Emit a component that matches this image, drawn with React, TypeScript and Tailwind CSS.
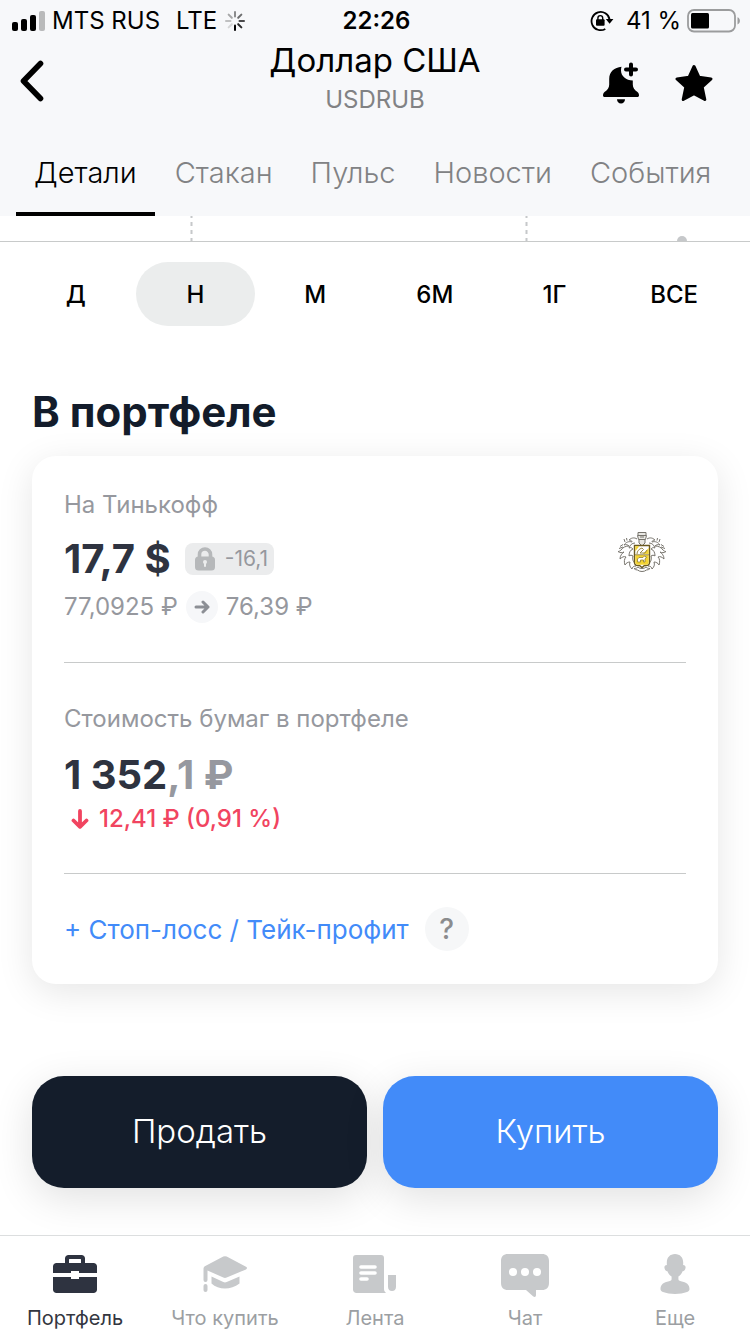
import { useState } from "react";
import type { ReactNode } from "react";

const TABS = ["Детали", "Стакан", "Пульс", "Новости", "События"];
const RANGES = ["Д", "Н", "М", "6М", "1Г", "ВСЕ"];

function SignalIcon() {
  return (
    <svg width="34" height="20" viewBox="0 0 34 20" aria-hidden="true">
      <rect x="0" y="11" width="6" height="9" rx="2" />
      <rect x="9" y="8" width="6" height="12" rx="2" />
      <rect x="18" y="4" width="6" height="16" rx="2" />
      <rect x="27" y="0" width="6" height="20" rx="2" fill="#b9babb" />
    </svg>
  );
}

function SpinnerIcon() {
  const shades = ["#8b8c8d", "#6d6e6f", "#4a4a4b", "#2a2a2a", "#000", "#d4d5d6", "#bfc0c1", "#a6a7a8"];
  return (
    <svg width="20" height="20" viewBox="0 0 20 20" aria-hidden="true">
      {shades.map((shade, i) => (
        <line
          key={shade}
          x1="10"
          y1="1"
          x2="10"
          y2="5.5"
          stroke={shade}
          strokeWidth="2"
          strokeLinecap="round"
          transform={`rotate(${i * 45} 10 10)`}
        />
      ))}
    </svg>
  );
}

function RotationLockIcon() {
  return (
    <svg width="24" height="22" viewBox="0 0 24 22" fill="none" stroke="#000" strokeWidth="1.8" aria-hidden="true">
      <path d="M15.3 18.9A9.1 9.1 0 1 1 19.6 9.5" />
      <path d="M15.8 9h7.6l-3.8 4.8z" fill="#000" stroke="none" />
      <rect x="6" y="9.3" width="8.6" height="6.4" rx="1" fill="#000" stroke="none" />
      <path d="M7.9 10V8a2.4 2.4 0 0 1 4.8 0v2" strokeWidth="1.4" />
    </svg>
  );
}

function BatteryIcon() {
  return (
    <svg width="54" height="24" viewBox="0 0 54 24" aria-hidden="true">
      <rect x="1" y="1" width="47" height="21.5" rx="6" fill="none" stroke="#9b9c9d" strokeWidth="1.8" />
      <rect x="4" y="4" width="18" height="15.5" rx="1.500" />
      <path d="M50.500 8.2c3.2 1.2 3.2 6 0 7.2z" fill="#9b9c9d" />
    </svg>
  );
}

function BackIcon() {
  return (
    <svg width="24" height="42" viewBox="0 0 24 42" fill="none" aria-hidden="true">
      <path d="M20.500 3.500 3.500 21l17 17.500" stroke="#000" strokeWidth="5.600" strokeLinecap="round" strokeLinejoin="round" />
    </svg>
  );
}

function BellPlusIcon() {
  return (
    <svg width="36" height="42" viewBox="0 0 36 42" aria-hidden="true">
      <path d="M18.500 4.800C11.500 5.500 6.200 9.500 6.200 17v5.500c0 3.500-1.700 5.500-4.700 7.500C.5 30.800 0 32 0 33.500 0 34.400.7 35 1.500 35h33c.8 0 1.500-.6 1.500-1.500 0-1.500-.5-2.700-1.500-3.500-3-2-4.700-4-4.700-7.500v-4C23 18.500 18 14 18 8.500c0-1.400.2-2.600.5-3.700z" />
      <path d="M28 2.500v10M23 7.500h10" stroke="#000" strokeWidth="4" strokeLinecap="round" />
      <path d="M14 37.300h8c0 2.500-1.700 4.200-4 4.200s-4-1.700-4-4.200z" />
    </svg>
  );
}

function StarIcon() {
  return (
    <svg width="38" height="38" viewBox="0 0 38 38" aria-hidden="true">
      <path
        d="M19 2.500 24 13.300 36 14.900 27.200 23 29.800 35.500 19 29.600 8.200 35.500 10.800 23 2 14.900 14 13.300z"
        stroke="#000"
        strokeWidth="3"
        strokeLinejoin="round"
      />
    </svg>
  );
}

function LockIcon() {
  return (
    <svg width="20" height="24" viewBox="0 0 20 24" aria-hidden="true">
      <path d="M4.500 12V7.500a5.500 5.500 0 0 1 11 0V12" fill="none" stroke="#b6b8ba" strokeWidth="3.600" />
      <rect x="0" y="9.500" width="20" height="14" rx="3.500" fill="#b6b8ba" />
      <circle cx="10" cy="15" r="2" fill="#eceded" />
      <rect x="9" y="15.500" width="2" height="4.500" rx="1" fill="#eceded" />
    </svg>
  );
}

function ArrowRightIcon() {
  return (
    <svg width="16" height="14" viewBox="0 0 16 14" fill="none" stroke="#8c8f95" strokeWidth="3" strokeLinecap="round" strokeLinejoin="round" aria-hidden="true">
      <path d="M2 7h12M9 2l5 5-5 5" />
    </svg>
  );
}

function ArrowDownIcon() {
  return (
    <svg width="18" height="20" viewBox="0 0 18 20" fill="none" stroke="#f14460" strokeWidth="3.800" strokeLinecap="round" strokeLinejoin="round" aria-hidden="true">
      <path d="M9 2v15.500M2.500 11.500 9 17.800l6.500-6.300" />
    </svg>
  );
}

function CrestHalf() {
  return (
    <g>
      <path d="M19 8c-3-2-6-1-8 1 2 0 3 1 3 2-3-1-6 0-8 3 2-1 4 0 5 1-3 0-6 1-8 4-1 1-2 1.500-3 1.500 2 1.500 4 1.500 6 .5-2 1.500-4 3.500-4 7 2-2 4-3 6-2-2 2-2 5-1 8 1-2 3-3 5-3-1 3 0 5 2 7 0-2 2-3 4-3" />
      <path d="M17 12c-3 0-5 2-6 5 2-1 3 0 4 1-3 1-4 4-4 7 1-1 3-1 4 0-1 3 0 6 3 8" />
      <path d="M2 15.500l3-2M1 17.500l4-1.500M7 11l-1-3M9 9.500 8.500 7" />
    </g>
  );
}

function CrestIcon() {
  return (
    <svg width="48" height="42" viewBox="0 0 48 42" fill="none" stroke="#77746d" strokeWidth="1" aria-label="Тинькофф" role="img">
      <CrestHalf />
      <g transform="translate(48 0) scale(-1 1)">
        <CrestHalf />
      </g>
      <path d="M20 1.500h8v3h-8zM19.500 4.500h9l-1 4h-7zM21 8.500h6v3.500l-3 3-3-3zM22 6h4" fill="#e9e8e4" />
      <path d="M16.500 14.500h15v17c0 2-1.500 3-3.500 3h-1.500L24 36.500l-2.500-2H20c-2 0-3.500-1-3.500-3z" fill="#fff" stroke="#6b5a20" strokeWidth="1.400" />
      <path d="M17.300 24h13.400v7.500c0 1.400-1 2.200-2.500 2.200H20c-1.700 0-2.700-.8-2.700-2.200z" fill="#f4d433" stroke="none" />
      <path d="M17.300 15.300h4l-4 5zM30.700 17v6h-6z" fill="#f4d433" stroke="none" />
      <path d="M19 23c0-3 2-5 5-6l1.500 1.500L22 22h5l2-3" stroke="#9a8a4a" />
      <path d="M17 23.800h14" stroke="#9a8a4a" />
      <path d="M19.500 31v-3l1.500-1.500h4l1.500-1.500 2 1-1.500 2v3h-1.500v-2h-3v2z" fill="#fff" stroke="#8f7d35" strokeWidth=".8" />
      <path d="M16 37.500c2 0 3-.5 4-1.500 1.500 2 6.500 2 8 0 1 1 2 1.500 4 1.500-1 1-2 1.500-3.500 1.500-2.500 2-6.500 2-9 0-1.500 0-2.500-.5-3.500-1.500z" fill="#fff" />
    </svg>
  );
}

function BriefcaseIcon() {
  return (
    <svg width="44" height="38" viewBox="0 0 44 38" fill="#2e3340" aria-hidden="true">
      <path d="M12 8V3.500C12 1.500 13.500 0 15.500 0h13C30.500 0 32 1.500 32 3.500V8h8.500C42.500 8 44 9.500 44 11.500V18H26v-2h-8v2H0v-6.500C0 9.500 1.500 8 3.500 8zM16 8h12V4.500a.5.500 0 0 0-.5-.5h-11a.5.500 0 0 0-.5.500z" />
      <path d="M0 22h18v2h8v-2h18v12.500c0 2-1.500 3.500-3.500 3.500h-37C1.500 38 0 36.500 0 34.500z" />
    </svg>
  );
}

function CapIcon() {
  return (
    <svg width="44" height="36" viewBox="0 0 44 36" fill="#c7c9cb" aria-hidden="true">
      <path d="M20.300.6a3.500 3.500 0 0 1 3.400 0L43 10.700c1.300.7 1.300 2 0 2.700l-19.300 8.200a4 4 0 0 1-3.400 0L4.500 14.500V24a2 2 0 0 1-4 0V13c0-1.500.5-2.300 1.800-3z" />
      <path d="M8.500 20.500 20.300 26a4 4 0 0 0 3.400 0l12.800-5.500v7C32 31 27 32.500 22 32.500S12 31 8.500 27.500z" />
      <rect x=".5" y="28" width="4" height="8" rx="2" />
    </svg>
  );
}

function FeedIcon() {
  return (
    <svg width="44" height="38" viewBox="0 0 44 38" fill="#c7c9cb" aria-hidden="true">
      <path d="M3 0h25c2 0 3 1 3 3v31c0 1.700.8 3.200 2.200 4H3.500C1.500 38 0 36.500 0 34.500V3c0-2 1-3 3-3z" />
      <path d="M35 20h8v11.500c0 3-1.500 4.500-4 4.500s-4-1.500-4-4.500z" />
      <path d="M8 12h14M8 18h14M8 24h6" stroke="#fff" strokeWidth="3.600" strokeLinecap="round" />
    </svg>
  );
}

function ChatIcon() {
  return (
    <svg width="48" height="46" viewBox="0 -3 48 46" fill="#c7c9cb" aria-hidden="true">
      <path d="M7 0h34c4.500 0 7 2.500 7 7v22c0 4.500-2.500 7-7 7h-6v5c0 2-1.500 2.500-3 1.200L25 36H7c-4.500 0-7-2.500-7-7V7c0-4.500 2.500-7 7-7z" />
      <circle cx="12" cy="18" r="4" fill="#fff" />
      <circle cx="24" cy="18" r="4" fill="#fff" />
      <circle cx="36" cy="18" r="4" fill="#fff" />
    </svg>
  );
}

function PersonIcon() {
  return (
    <svg width="30" height="40" viewBox="0 0 30 40" fill="#c7c9cb" aria-hidden="true">
      <path d="M15 0c5 0 8.200 3.500 8.200 8.500 0 1 0 1.800-.1 2.600 2.200.3 2.900 1.500 2.300 3.400-.5 1.700-1.400 2.600-2.800 2.800-.8 2.200-2.100 4.300-4.200 5.300v2.400c0 1.200.7 1.800 2.500 2.200C26.500 28.300 29.500 30.500 29.500 35c0 1.500-.8 2.400-2.500 3-6.500 2.600-17.500 2.600-24 0C1.300 37.400.5 36.500.5 35c0-4.500 3-6.700 8.600-7.800 1.800-.4 2.500-1 2.500-2.200v-2.400c-2.100-1-3.400-3.100-4.200-5.300-1.400-.2-2.300-1.100-2.800-2.800-.6-1.900.1-3.100 2.300-3.400-.1-.8-.1-1.600-.1-2.600C6.800 3.500 10 0 15 0z" />
    </svg>
  );
}

function StatusBar() {
  return (
    <div className="grid h-10 grid-cols-[1fr_auto_1fr] items-center pt-0.5 pr-[9px] pl-3 text-2xl">
      <div className="flex items-center">
        <SignalIcon />
        <span className="ml-1.5">MTS RUS</span>
        <span className="ml-4">LTE</span>
        <span className="ml-2">
          <SpinnerIcon />
        </span>
      </div>
      <span className="font-semibold">22:26</span>
      <div className="flex items-center justify-end">
        <RotationLockIcon />
        <span className="mr-1.5 ml-3">41 %</span>
        <BatteryIcon />
      </div>
    </div>
  );
}

function Divider() {
  return <hr className="border-t border-[#c8caca]" />;
}

function NavItem({ icon, label, active = false }: { icon: ReactNode; label: string; active?: boolean }) {
  return (
    <a href="#" className={`flex flex-col items-center text-xl ${active ? "text-[#333640]" : "text-[#9c9fa3]"}`}>
      <span className="flex h-12 items-center">{icon}</span>
      <span className="mt-1.5 whitespace-nowrap">{label}</span>
    </a>
  );
}

export default function App() {
  const [tab, setTab] = useState("Детали");
  const [range, setRange] = useState("Н");

  return (
    <div className="flex min-h-screen flex-col overflow-x-hidden bg-white font-[Inter,sans-serif] text-black">
      <header className="bg-[#f7f8fa]">
        <StatusBar />
        <div className="grid h-[88px] grid-cols-[1fr_auto_1fr] items-start px-5">
          <button type="button" aria-label="Назад" className="mt-5 w-6">
            <BackIcon />
          </button>
          <div className="text-center">
            <h1 className="text-[33px] leading-10">Доллар США</h1>
            <p className="text-2xl leading-10 text-[#818284]">USDRUB</p>
          </div>
          <div className="mt-[22px] mr-[17px] flex items-center justify-end gap-9">
            <button type="button" aria-label="Добавить уведомление">
              <BellPlusIcon />
            </button>
            <button type="button" aria-label="В избранном">
              <StarIcon />
            </button>
          </div>
        </div>
        <nav className="flex h-[88px] gap-0.5 px-4">
          {TABS.map((name) => (
            <button
              key={name}
              type="button"
              onClick={() => setTab(name)}
              className={`border-b-4 px-[18px] pt-1.5 text-[29px] font-light ${
                name === tab ? "border-black text-black" : "border-transparent text-[#818284]"
              }`}
            >
              {name}
            </button>
          ))}
        </nav>
      </header>

      <svg className="block h-[26px] w-full" viewBox="0 0 750 26" preserveAspectRatio="none" fill="none" aria-hidden="true">
        <path d="M191.500 0v25M526.500 0v25" stroke="#c6c8ca" strokeWidth="2" strokeDasharray="4 4" strokeDashoffset="2" />
        <path d="M677 25a5 5 0 0 1 10 0z" fill="#c6c8ca" />
        <path d="M0 25.500h750" stroke="#c8caca" />
      </svg>

      <div className="mt-5 grid grid-cols-6 px-4">
        {RANGES.map((name) => (
          <button
            key={name}
            type="button"
            onClick={() => setRange(name)}
            className={`h-16 rounded-full pt-0.5 text-2xl font-medium ${name === range ? "bg-[#ebeded]" : ""}`}
          >
            {name}
          </button>
        ))}
      </div>

      <main className="px-8">
        <h2 className="mt-[62px] text-[42px] leading-12 font-bold text-[#131c2b]">В портфеле</h2>

        <section className="mt-5 rounded-3xl bg-white px-8 shadow-[0_8px_36px_rgba(0,0,0,0.1)]">
          <div className="flex h-[206px] items-start justify-between pt-[33px]">
            <div>
              <p className="text-2xl text-[#96989e]">На Тинькофф</p>
              <div className="mt-3.5 flex h-12 items-center gap-3.5">
                <strong className="text-[40px] leading-12 font-bold text-[#2e3340]">17,7 $</strong>
                <span className="flex h-8 items-center gap-2.5 rounded-lg bg-[#ebeced] pr-1.5 pl-2.5 text-[21px] text-[#96989e]">
                  <LockIcon />
                  -16,1
                </span>
              </div>
              <div className="mt-2 flex items-center gap-2 text-2xl text-[#96989e]">
                <span>77,0925 ₽</span>
                <span className="flex size-8 items-center justify-center rounded-full bg-[#f6f7f9]">
                  <ArrowRightIcon />
                </span>
                <span>76,39 ₽</span>
              </div>
            </div>
            <span className="mt-[42px] mr-5">
              <CrestIcon />
            </span>
          </div>
          <Divider />
          <div className="h-[210px] pt-10">
            <p className="text-2xl text-[#96989e]">Стоимость бумаг в портфеле</p>
            <p className="mt-4 text-[40px] leading-12 font-bold text-[#2e3340]">
              1 352<span className="text-[#96989f]">,1 ₽</span>
            </p>
            <p className="mt-1 flex items-center gap-2.5 pl-[7px] text-2xl font-medium text-[#f14460]">
              <ArrowDownIcon />
              12,41 ₽ (0,91 %)
            </p>
          </div>
          <Divider />
          <div className="flex h-[110px] items-center gap-4">
            <a href="#" className="text-[26px] text-[#428bf9]">
              + Стоп-лосс / Тейк-профит
            </a>
            <button
              type="button"
              aria-label="Справка"
              className="size-11 rounded-full bg-[#f6f7f8] text-[28px] font-medium text-[#8b8c8e]"
            >
              ?
            </button>
          </div>
        </section>

        <div className="mt-[92px] mb-10 grid grid-cols-2 gap-4 text-[33px] font-light text-white">
          <button type="button" className="h-28 rounded-[32px] bg-[#141d2b] shadow-[0_10px_40px_rgba(0,0,0,0.12)]">
            Продать
          </button>
          <button type="button" className="h-28 rounded-[32px] bg-[#428bf9] shadow-[0_10px_40px_rgba(0,0,0,0.12)]">
            Купить
          </button>
        </div>
      </main>

      <nav className="mt-auto grid h-[99px] grid-cols-5 border-t border-[#dcdedf] pt-3.5">
        <NavItem icon={<BriefcaseIcon />} label="Портфель" active />
        <NavItem icon={<CapIcon />} label="Что купить" />
        <NavItem icon={<FeedIcon />} label="Лента" />
        <NavItem icon={<ChatIcon />} label="Чат" />
        <NavItem icon={<PersonIcon />} label="Еще" />
      </nav>
    </div>
  );
}
